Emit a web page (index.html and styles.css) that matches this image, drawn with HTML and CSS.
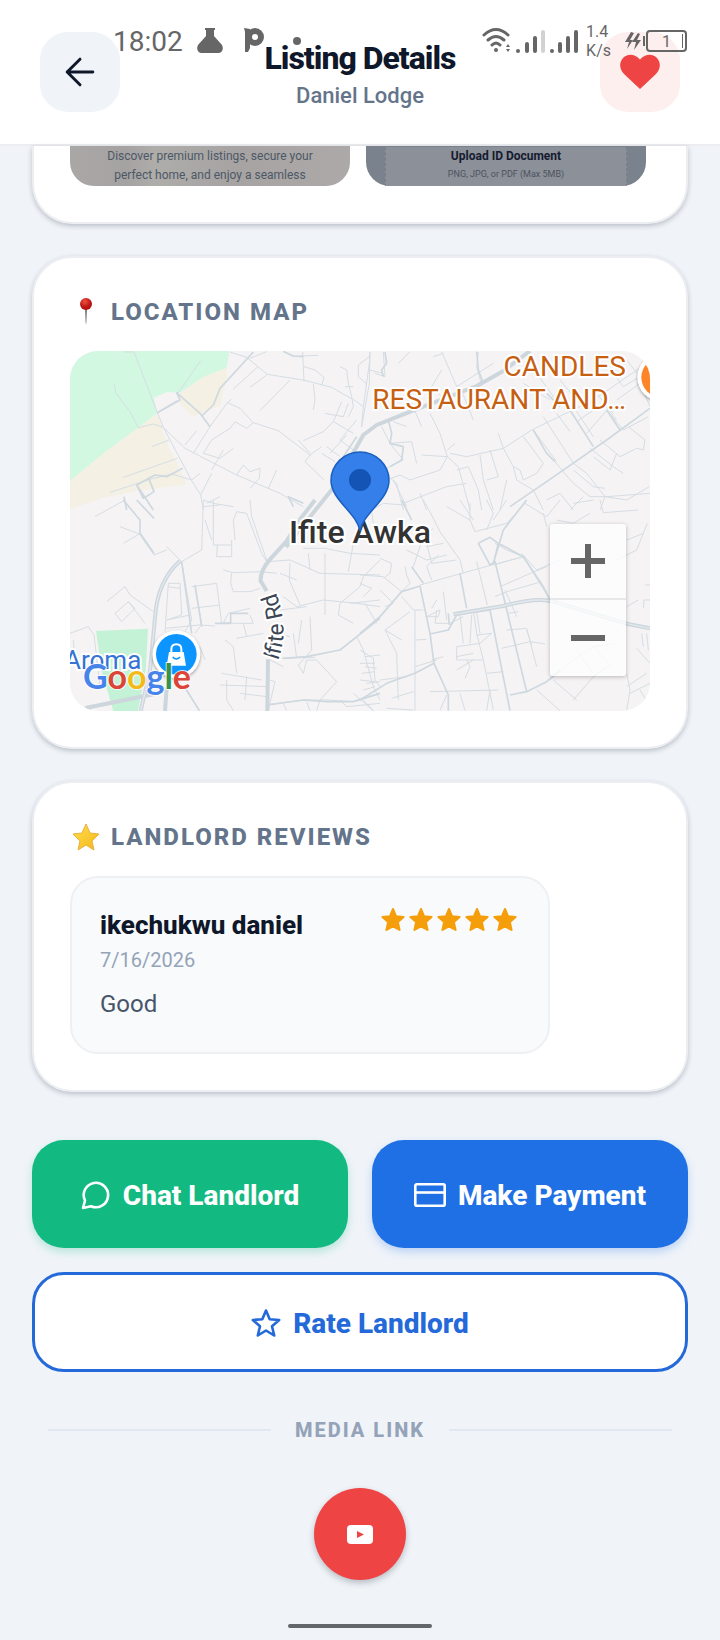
FILE: index.html
```html
<!DOCTYPE html>
<html lang="en">
<head>
    <meta charset="UTF-8">
    <meta name="viewport" content="width=device-width, initial-scale=1.0">
    <title>Listing Details</title>
    <link rel="stylesheet" href="styles.css">
</head>
<body>
    <div class="status-bar">
        <div class="status-left">
            <span class="clock">18:02</span>
            <svg class="flask-icon" width="26" height="26" viewBox="0 0 26 26"><path d="M8 0h10v2h-1v6l8 9c2 4 0 8-3 8H4c-3 0-5-4-3-8l8-9V2H8z"/></svg>
            <svg class="app-icon" width="22" height="26" viewBox="0 0 22 26"><circle cx="12" cy="9" r="6" fill="none" stroke="#666" stroke-width="6"/><path d="M1 0l6 1v19l-2 4H2V4z"/></svg>
            <span class="status-dot"></span>
        </div>
        <div class="status-right">
            <svg width="96" height="28" viewBox="0 0 96 28">
                <g fill="none" stroke="#666" stroke-width="3" stroke-linecap="round">
                    <path d="M2 8q12-11 24 0M6 13q8-7 16 0M10 18q4-4 8 0"/>
                    <path d="M45 17v7M53 11v13M78 17v7M86 11v13M94 5v19" stroke-width="4"/>
                    <path d="M61 5v19" stroke="#d2d2d2" stroke-width="4"/>
                </g>
                <circle cx="14" cy="23" r="2"/><circle cx="36" cy="24" r="2"/><circle cx="70" cy="24" r="2"/>
                <path d="M24 20l2-3 2 3zM24 22l2 3 2-3z"/>
            </svg>
            <div class="net-speed">1.4<br>K/s</div>
            <svg class="charge-icon" width="16" height="18" viewBox="0 0 16 18"><path d="M6 0L0 10h4l-2 7 6-9H5l4-7zM13 1L7 10h4l-2 8 7-10h-4l3-6z"/></svg>
            <div class="battery">1</div>
        </div>
    </div>

    <header class="header">
        <button class="icon-button" aria-label="Go back">
            <svg width="44" height="44" viewBox="0 0 24 24" fill="none" stroke="#0f172a" stroke-width="1.6" stroke-linecap="round" stroke-linejoin="round"><path d="M19 12H5M12 19l-7-7 7-7"/></svg>
        </button>
        <div class="header-text">
            <h1>Listing Details</h1>
            <p>Daniel Lodge</p>
        </div>
        <button class="icon-button favorite" aria-label="Remove from favorites">
            <svg width="40" height="36" viewBox="0 0 40 36"><path fill="#ef4444" d="M20 35L4.5 20.5C-1.2 15-1 8 3.5 3.5 8.5-1 15.5.5 20 5.5 24.5.5 31.5-1 36.5 3.5 41 8 41.2 15 35.5 20.5z"/></svg>
        </button>
    </header>

    <main class="content">
        <section class="card gallery-card">
            <div class="gallery">
                <div class="photo photo-home">
                    <p>Discover premium listings, secure your perfect home, and enjoy a seamless</p>
                </div>
                <div class="photo photo-upload">
                    <div class="upload-panel">
                        <strong>Upload ID Document</strong>
                        <small>PNG, JPG, or PDF (Max 5MB)</small>
                    </div>
                </div>
            </div>
        </section>

        <section class="card">
            <h2>
                <svg width="32" height="32" viewBox="0 0 32 32">
                    <defs>
                        <radialGradient id="pin-head" cx="40%" cy="30%"><stop offset="0" stop-color="#f0503c"/><stop offset="1" stop-color="#b71414"/></radialGradient>
                        <linearGradient id="pin-needle" x2="0" y2="1"><stop offset="0" stop-color="#777"/><stop offset="1" stop-color="#ddd"/></linearGradient>
                    </defs>
                    <path fill="url(#pin-needle)" d="M15 13h2v13l-1 3-1-3z"/>
                    <circle cx="16" cy="8" r="6" fill="url(#pin-head)"/>
                </svg>
                Location Map
            </h2>
            <div class="map">
                <svg class="map-canvas" viewBox="0 0 1740 1080" preserveAspectRatio="xMidYMid slice">
                    <rect width="1740" height="1080" fill="#f5f3f4"/>
                    <!-- parks and sand -->
                    <path fill="#d2f8e2" d="M0 0H478L470 50L400 78L330 125L293 123L252 140L262 186L205 230L110 300L0 390z"/>
                    <path fill="#f4f0e4" d="M470 50L470 80L450 165L366 198L330 165L325 130L400 78zM262 186L285 260L350 400L200 420L100 440L0 475V390L110 300L205 230z"/>
                    <path fill="#f5f3f4" d="M252 140L293 123L366 196L300 300L262 186z"/>
                    <path fill="#c3f2d7" d="M78 840L234 833L227 960L204 1080H130L95 960z"/>

                    <g class="road">
                        <!-- north-west -->
                        <g transform="translate(-150 -333)">
                            <path d="M310 336H342L412 518L430 562L515 722L542 765L550 810M542 362L470 465M282 432L288 460L330 515L355 563L400 552L430 562L495 625L555 656L650 705L780 760L850 800"/>
                            <path d="M630 336L680 352L742 403L850 420L935 442L1010 485L1030 500M635 478L622 488L570 560L520 640M622 488L660 505L700 548L775 572L870 645L905 620M700 548L680 565L645 545L630 565L575 600L550 640M810 420L720 512M740 405L690 442M714 380L640 447M690 355L740 335M790 335L820 350L850 348L895 346M848 336L852 425M852 380L885 390L912 412L905 436M880 432L885 480L880 510M960 380L980 390L985 430L995 470L1000 500L985 530"/>
                            <path d="M1050 336L1048 370L1030 500L1025 560M1048 350L1015 375L1015 410L1040 432M965 485L940 545L910 575L850 602M940 545L1000 580M915 520L970 530L985 490M870 645L855 665L912 720M905 640L945 665M835 600L870 640M920 620L960 650M980 585L930 640"/>
                            <path d="M410 518L470 482M395 620L447 600M310 712L472 655M270 757L400 715L455 702L515 720M495 615L530 572M550 640L600 655L640 625M575 690L610 630M650 705L670 675L690 695L720 685L718 715L690 745M745 745L770 690M515 720L540 700M542 765L575 700M550 800L600 795M560 790L600 770M1000 440L975 440M1010 540L960 600L1000 630"/>
                        </g>
                        <!-- north-east -->
                        <g transform="translate(870 -333)">
                            <path d="M30 336L28 430L5 560M70 336L75 410L45 400M150 335L115 370M245 335L290 440L400 370M355 336L350 380L365 435M220 350L250 340M70 400L28 390M245 390L215 440L255 480M300 440L340 540M150 480L185 560M210 520L240 580L262 650L295 680L330 810M65 560L90 610L155 605L170 670M90 610L130 660L88 680L60 700M100 545L140 560M262 650L185 645M262 650L240 690L150 720L120 705L80 720M262 630L285 610M290 690L325 680L355 750L365 810M320 650L270 640M320 650L430 625L515 570L700 480L860 370"/>
                            <path d="M360 645L370 720L400 810M390 630L415 710L380 720M415 580L430 625M520 570L590 665M490 590L550 670L530 700M550 530L640 670L680 700L735 770M590 520L630 575M530 700L490 720L480 690L460 680L470 720L520 750L550 810M460 680L430 625M580 660L640 730L690 770L740 770L870 760M640 690L700 740L735 745M700 650L750 690L770 640M690 625L760 680L790 700M720 600L780 650L830 625L850 630L855 600L805 560M650 545L730 490L770 540M680 580L750 500M740 510L790 570L865 530M770 480L840 430L870 500M700 450L760 520M640 500L700 590M800 360L840 410L790 440L760 400M600 420L650 480L630 510M490 430L570 480M530 400L580 470"/>
                            <path d="M100 720L140 800M60 690L110 730L130 810M130 790L260 740L320 730M180 760L200 810M420 810L440 720M560 780L600 760L640 810M630 810L670 770M720 810L735 770L800 780L868 740"/>
                        </g>
                        <!-- south-west -->
                        <g transform="translate(-150 447)">
                            <path d="M225 50L315 0M310 130L358 102L300 80M358 102L402 165L440 150M440 140L485 185L545 150L550 0M260 305L315 260L330 285L400 335M285 340L325 305L345 325L305 365L285 340M325 305L375 370M150 400L205 380L222 405L240 560M160 420L165 480M435 395L445 250L480 250L485 345L440 360M485 185L515 360L495 395M445 260L480 265M515 260L590 250L605 370M515 325L600 315M435 385L540 375L585 378M525 400L540 380M545 370L525 260M490 560L540 632M540 440L555 480M440 360L510 345"/>
                            <path d="M550 0L580 10L640 20M580 0V135H635M555 60L575 120M635 120V170H590L592 135M640 60L650 35L680 40L725 160L740 185M640 60L645 120M610 210L640 218L730 215M635 218L632 250L640 275L690 275L720 265M690 0L695 50L740 180M740 185L810 180L900 220L1080 225M810 190L808 240L840 315M720 215L770 220M780 220L830 240M790 290L830 320L910 300L1010 310L1080 320M780 330L860 320"/>
                            <path d="M915 160V345M865 160L870 210M850 145H915L990 160L1080 165M985 215L1000 130M1080 180L1030 230L1020 260L960 310L955 345L1000 370M990 310L1080 300M1010 410L1030 450L1060 560L1080 600M1035 310L1070 370M870 350L875 450L835 495M835 495L850 520L860 480L890 480L950 545L900 600M820 400L830 475M810 410L770 400M845 360L835 430M650 415L730 400M670 370L680 410M690 345L700 370L650 370M650 370L610 368L625 340L690 325M615 420L640 440L650 520M605 520L725 540M600 555L745 560M660 580L740 590M620 540V600L640 632M680 530L675 600M750 540L765 545L745 630M750 480L790 500"/>
                            <path d="M780 475L885 472M1035 470L1080 465M1035 500L1070 505M1040 550L1080 545M1000 580L1060 632M960 600L980 620L1080 610M860 605L870 632M790 610L800 632M740 615L850 600L920 600L1000 605L1080 580M900 600L890 632"/>
                        </g>
                        <!-- south-east -->
                        <g transform="translate(870 447)">
                            <path d="M0 50L70 10L130 15M30 0L40 70M190 0L215 45L240 95M220 85L190 110L160 200M140 150L200 180L260 165M200 130L215 190L290 180M240 95L300 180L310 220M250 130L200 140M235 165L200 200L215 240M180 255L395 195L490 170L440 150L405 130M350 185L382 315M420 260L500 225L560 200M405 290L440 275L545 245M400 195L490 170L570 300M485 160L530 210L600 180M260 20L330 60L345 95L440 70M300 0L340 60M330 60L330 10M380 0L400 40L380 90M400 60L440 0M440 70L495 10L560 50L600 0M560 80L550 40M590 60L640 70L690 40M720 0L730 38L835 30M640 10L700 0M800 120L850 100L862 70M770 180L830 150L850 100"/>
                            <path d="M0 225L70 230L125 275M60 175L95 190L90 220L70 235M0 250L35 265L10 290M60 270L100 310L75 320M140 225L150 250L125 275M140 225L135 200M125 290L160 330H190M150 335L75 390L110 460L115 600M165 330V632M165 420L200 418M75 390L125 420M200 350L240 330L235 350L200 350M215 325L230 300M250 275L260 360M230 330L225 370L270 370L310 350M290 345L350 335L360 400M300 345L310 430M340 330L350 400L370 480L400 630M350 405L395 400M290 440L360 430L395 400M290 440V480L370 480M290 470L340 460M290 510L340 480M315 535L330 500L320 480M335 345L330 430"/>
                            <path d="M380 520L430 515M425 445L510 425L555 432M440 390L500 385L530 500M445 340L475 335M515 435L500 390M435 270L470 350M210 575L415 570M300 580L315 632M260 585L240 630M165 500L230 480M215 480L250 470M0 450L40 475L45 540L60 560M0 490L45 490M5 520L45 515M0 540L45 545M10 570L45 560M95 595L160 575M60 540L140 530M80 625L160 630M10 600L40 632M380 632L390 570M530 570L600 632M580 540L650 600M640 600L700 530L740 500M700 530L750 495L700 440M570 540L640 480L700 440L770 430M650 450L700 520M800 520L810 570L800 632M800 560L860 520M810 580L870 550M840 570L870 620M800 320L835 300M850 325L852 300L870 300M845 400L850 440M860 400L865 450M830 445L870 490M855 255H870"/>
                        </g>
                    </g>

                    <!-- secondary streets -->
                    <g class="road street">
                        <path transform="translate(-150 -333)" d="M412 518L480 480L470 458L540 520L570 560M545 528L580 495L600 445L700 336M488 685L440 710L405 705L350 735L370 775L402 755L385 712M350 735L400 810M312 770L320 810M790 334L820 348L850 350M1010 590L970 650M820 800L805 770L850 790"/>
                        <path transform="translate(870 -333)" d="M75 336L80 370L65 390L70 410M85 540L95 580L90 610L130 620L125 660L90 680M350 335L355 390L370 430M450 800L560 725L740 600L870 505M520 570L560 640L585 665M630 510L700 620M740 510L780 570M560 460L600 500"/>
                        <path transform="translate(-150 447)" d="M310 0L360 60V100L402 160M350 0L402 55M485 185L515 400M525 255L545 380M585 370H632V340H685M790 475L860 470L960 450L1080 355M740 615L850 600L920 605L1000 605L1080 580M538 632L500 570"/>
                        <path transform="translate(870 447)" d="M125 0L155 60M0 400L60 350L125 275L180 258L210 400L222 490L265 585V632M210 402L265 390L290 345L390 330M300 220L320 325M355 130L390 195L405 185L500 575L450 585M355 130L390 112L415 130L400 190L430 90L500 0M415 130L490 170L550 260L570 300M390 330L450 632M0 600L80 550L165 520L222 490M500 575L560 545L600 510M265 340L268 375M155 200L190 250"/>
                    </g>

                    <!-- main roads -->
                    <g class="road highway">
                        <path d="M648 588L790 410L880 252L920 222L1000 190L1220 105L1300 60L1380 0M592 1080L594 925M590 720L572 690Q570 660 600 625L650 570L690 505L735 447"/>
                        <path d="M212 1080L240 960L255 800Q262 690 330 630M60 1080L50 1070L250 1030M290 1010L285 1080M1150 790L1300 765Q1410 735 1460 755L1670 818L1740 832"/>
                    </g>
                    <g class="road highway-core">
                        <path d="M212 1080L240 960L255 800Q262 690 330 630M1150 790L1300 765Q1410 735 1460 755L1670 818L1740 832"/>
                    </g>

                    <path id="ifite-rd" fill="none" d="M624 930Q662 825 612 712"/>
                    <text class="road-label"><textPath href="#ifite-rd">Ifite Rd</textPath></text>

                    <!-- places -->
                    <g class="place">
                        <circle cx="319" cy="910" r="72" fill="#fff"/>
                        <circle cx="319" cy="910" r="61" fill="#0c94ff"/>
                        <path fill="#fff" d="M297 903H341L348 944H290z"/>
                        <path fill="none" stroke="#fff" stroke-width="6" d="M304 910V895Q304 880 319 880Q334 880 334 895V910"/>
                        <path fill="none" stroke="#0c94ff" stroke-width="5" d="M308 918Q319 930 330 918"/>
                    </g>
                    <g class="place">
                        <circle cx="1774" cy="79" r="72" fill="#fff"/>
                        <circle cx="1774" cy="79" r="60" fill="#ff8427"/>
                    </g>
                </svg>

                <span class="map-label place-orange">CANDLES<br>RESTAURANT AND…</span>
                <span class="map-label town">Ifite Awka</span>
                <span class="map-label place-blue">Aroma</span>
                <span class="map-label google"><i class="g-blue">G</i><i class="g-red">o</i><i class="g-yellow">o</i><i class="g-blue">g</i><i class="g-green">l</i><i class="g-red">e</i></span>

                <svg class="marker" width="60" height="82" viewBox="0 0 60 82">
                    <path d="M30 80C27 62 1 49 1 29.5A29 28.5 0 0 1 59 29.5C59 49 33 62 30 80z" fill="#347fe9" stroke="#1b5fc0" stroke-width="1.5"/>
                    <circle cx="30" cy="29" r="11" fill="#1354b5"/>
                </svg>

                <div class="zoom-controls">
                    <button aria-label="Zoom in"><svg width="34" height="34" viewBox="0 0 34 34"><path d="M14 0h6v14h14v6H20v14h-6V20H0v-6h14z"/></svg></button>
                    <button aria-label="Zoom out"><svg width="34" height="34" viewBox="0 0 34 34"><path d="M0 14h34v6H0z"/></svg></button>
                </div>
            </div>
        </section>

        <section class="card">
            <h2>
                <svg width="32" height="32" viewBox="0 0 32 32">
                    <defs><linearGradient id="gold" x2="1" y2="1"><stop offset="0" stop-color="#ffe04a"/><stop offset="1" stop-color="#f5b51c"/></linearGradient></defs>
                    <path fill="url(#gold)" stroke="#eab13a" stroke-width="1" stroke-linejoin="round" d="M16 3l4 9 9 1-7 7 2 9-8-5-8 5 2-9-7-7 9-1z"/>
                </svg>
                Landlord Reviews
            </h2>
            <article class="review">
                <div class="review-header">
                    <div>
                        <h3>ikechukwu daniel</h3>
                        <time datetime="2026-07-16">7/16/2026</time>
                    </div>
                    <div class="stars" role="img" aria-label="5 out of 5 stars">
                        <svg width="0" height="0" class="sprite"><symbol id="star" viewBox="0 0 26 26"><path d="M13 3l3 7.200 7.600.7-5.700 5.200 1.700 7.900-6.600-3.700L6.400 24l1.700-7.900-5.700-5.200 7.600-.7z"/></symbol></svg>
                        <svg width="26" height="26"><use href="#star"/></svg>
                        <svg width="26" height="26"><use href="#star"/></svg>
                        <svg width="26" height="26"><use href="#star"/></svg>
                        <svg width="26" height="26"><use href="#star"/></svg>
                        <svg width="26" height="26"><use href="#star"/></svg>
                    </div>
                </div>
                <p>Good</p>
            </article>
        </section>

        <div class="actions">
            <button class="action chat">
                <svg width="30" height="30" viewBox="0 0 30 30" fill="none" stroke="#fff" stroke-width="2.6" stroke-linejoin="round"><path d="M2 28L4 20.5A12.2 12.2 0 1 1 10 26.200z"/></svg>
                Chat Landlord
            </button>
            <button class="action pay">
                <svg width="32" height="28" viewBox="0 0 32 28" fill="none" stroke="#fff" stroke-width="2.6"><rect x="1.3" y="3.3" width="29.4" height="21.4" rx="1.5"/><path d="M1 11.5h30"/></svg>
                Make Payment
            </button>
            <button class="action rate">
                <svg width="30" height="30" viewBox="0 0 30 30" fill="none" stroke="#2469d9" stroke-width="2.6" stroke-linejoin="round"><path d="M15 2.500l3.700 8.700 9.500.8-7.200 6.200 2.200 9.300-8.200-5-8.200 5 2.200-9.300L1.800 12l9.500-.8z"/></svg>
                Rate Landlord
            </button>
        </div>

        <div class="divider"><span>Media Link</span></div>

        <a class="youtube" href="#" aria-label="YouTube">
            <svg width="28" height="20" viewBox="0 0 28 20"><rect x="1" y="1" width="26" height="19" rx="4" fill="#fff"/><path fill="#ef4444" d="M11 7l7 3.500-7 3.500z"/></svg>
        </a>
    </main>

    <div class="home-indicator"></div>
</body>
</html>
```
FILE: styles.css
```css
:root {
    --bg-color: #f0f4f9;
    --text-color: #0f172a;
    --slate: #64748b;
    --light-slate: #94a3b8;
    --line: #e2e8f0;
    --blue: #1f6fe5;
    --blue-outline: #2469d9;
    --green: #12b981;
    --red: #ef4444;
    --system: #666;
}

* {
    margin: 0;
    padding: 0;
    box-sizing: border-box;
}

body {
    background-color: var(--bg-color);
    color: var(--text-color);
    font-family: Roboto, "Liberation Sans", sans-serif;
}

button {
    border: none;
    font-family: inherit;
    cursor: pointer;
}

svg {
    flex-shrink: 0;
}

/* System status bar, drawn over the header */
.status-bar {
    position: absolute;
    top: 22px;
    left: 0;
    right: 0;
    z-index: 2;
    display: flex;
    justify-content: space-between;
    padding: 0 33px 0 113px;
    color: var(--system);
    fill: var(--system);
    pointer-events: none;
}

.status-left,
.status-right {
    display: flex;
    align-items: center;
    height: 38px;
}

.clock {
    font-size: 28px;
}

.flask-icon {
    margin-left: 14px;
}

.app-icon {
    margin-left: 20px;
}

.status-dot {
    width: 8px;
    height: 8px;
    margin-left: 28px;
    border-radius: 50%;
    background-color: var(--system);
}

.net-speed {
    margin-left: 8px;
    font-size: 16px;
    line-height: 19px;
}

.charge-icon {
    margin-left: 14px;
}

.battery {
    position: relative;
    width: 41px;
    height: 22px;
    margin-left: 5px;
    border: 2px solid var(--system);
    border-radius: 4px;
    font-size: 16px;
    line-height: 19px;
    text-align: center;
}

.battery::before {
    content: "";
    position: absolute;
    top: 4px;
    left: -5px;
    width: 2px;
    height: 10px;
    background-color: var(--system);
}

.battery::after {
    content: "";
    position: absolute;
    top: 2px;
    right: 2px;
    width: 1px;
    height: 14px;
    background-color: var(--system);
}

.header {
    display: flex;
    align-items: center;
    justify-content: space-between;
    height: 146px;
    padding: 0 40px;
    border-bottom: 2px solid #ebedf0;
    background-color: white;
}

.header-text {
    padding-top: 10px;
    text-align: center;
}

.header h1 {
    font-size: 32px;
    font-weight: 800;
    line-height: 38px;
    letter-spacing: -1px;
}

.header p {
    color: var(--slate);
    font-size: 22px;
    font-weight: 500;
    line-height: 38px;
}

.icon-button {
    display: flex;
    align-items: center;
    justify-content: center;
    width: 80px;
    height: 80px;
    border-radius: 28px;
    background-color: #f0f4f9;
}

.favorite {
    background-color: #feefef;
}

.content {
    padding: 0 32px;
}

.card {
    margin-bottom: 32px;
    padding: 36px;
    border: 2px solid #eceef2;
    border-radius: 40px;
    background-color: white;
    box-shadow: 0 2px 5px rgba(15, 23, 42, 0.24);
}

.card h2 {
    display: flex;
    align-items: center;
    gap: 9px;
    height: 35px;
    margin-bottom: 22px;
    color: var(--slate);
    font-size: 24px;
    font-weight: 800;
    letter-spacing: 2px;
    text-transform: uppercase;
}

.gallery-card {
    padding-top: 0;
    border-top: none;
    border-radius: 0 0 40px 40px;
}

.gallery {
    display: flex;
    gap: 16px;
}

.photo {
    flex: 0 0 280px;
    height: 40px;
    padding-top: 1px;
    border-radius: 0 0 24px 24px;
    overflow: hidden;
    text-align: center;
}

.photo-home {
    padding-left: 28px;
    padding-right: 28px;
    background: linear-gradient(90deg, #aaa8a6, #a5a2a2 20%, #aeadaa 30%, #a6a3a2 60%, #aca9a8);
    color: #4d5866;
    font-size: 12px;
    line-height: 19px;
}

.photo-upload {
    padding-left: 19px;
    padding-right: 19px;
    background-color: #7a828d;
}

.upload-panel {
    display: flex;
    flex-direction: column;
    height: 40px;
    border: 1px dashed #777e8a;
    border-width: 0 1px;
    background-color: #8c9098;
}

.upload-panel strong {
    color: #141b30;
    font-size: 12px;
    line-height: 19px;
}

.upload-panel small {
    color: #4c535f;
    font-size: 9px;
    line-height: 16px;
}

.map {
    position: relative;
    height: 360px;
    border-radius: 28px;
    overflow: hidden;
}

.map-canvas {
    display: block;
    width: 100%;
    height: 100%;
}

.road {
    fill: none;
    stroke: #d5dde3;
    stroke-width: 3;
    stroke-linejoin: round;
}

.street {
    stroke: #ced8df;
    stroke-width: 5;
}

.highway {
    stroke: #ccd6dc;
    stroke-width: 12;
}

.highway-core {
    stroke: #e3e9ed;
    stroke-width: 4;
}

.place {
    filter: drop-shadow(0 4px 4px rgba(0, 0, 0, 0.35));
}

.road-label {
    fill: #3c4654;
    stroke: white;
    stroke-width: 12px;
    stroke-linejoin: round;
    paint-order: stroke;
    font-size: 68px;
}

.map-label {
    position: absolute;
    -webkit-text-stroke: 4px white;
    paint-order: stroke fill;
    white-space: nowrap;
}

.place-orange {
    top: -1px;
    right: 24px;
    color: #c75f12;
    font-size: 28px;
    line-height: 33px;
    text-align: right;
}

.town {
    top: 161px;
    left: 50%;
    transform: translateX(-50%);
    color: #333;
    font-size: 32px;
    font-weight: 500;
    line-height: 40px;
}

.place-blue {
    left: -6px;
    bottom: 35px;
    color: #3573d4;
    font-size: 26px;
    line-height: 32px;
}

.google {
    left: 13px;
    bottom: 15px;
    font-family: Lato, sans-serif;
    font-size: 34px;
    font-weight: 700;
    line-height: 40px;
    -webkit-text-stroke: 2px rgba(255, 255, 255, 0.8);
}

.google i {
    font-style: normal;
}

.g-blue {
    color: #4683ea;
}

.g-red {
    color: #dc4437;
}

.g-yellow {
    color: #f3ba1a;
}

.g-green {
    color: #34924e;
}

.marker {
    position: absolute;
    top: 100px;
    left: 50%;
    transform: translateX(-50%);
}

.zoom-controls {
    position: absolute;
    right: 24px;
    bottom: 35px;
    width: 76px;
    border-radius: 3px;
    background-color: rgba(255, 255, 255, 0.75);
    box-shadow: 0 1px 4px rgba(0, 0, 0, 0.25);
}

.zoom-controls button {
    display: flex;
    align-items: center;
    justify-content: center;
    width: 100%;
    height: 76px;
    background: none;
    fill: var(--system);
}

.zoom-controls button:first-child {
    border-bottom: 2px solid #e6e8e9;
}

.review {
    width: 480px;
    max-width: 100%;
    padding: 28px;
    border: 2px solid #eef0f3;
    border-radius: 28px;
    background-color: #f8fafc;
}

.review-header {
    display: flex;
    justify-content: space-between;
}

.review h3 {
    font-size: 26px;
    font-weight: 800;
    line-height: 38px;
}

.review time {
    display: block;
    color: var(--light-slate);
    font-size: 20px;
    line-height: 32px;
}

.review p {
    margin-top: 8px;
    color: #475569;
    font-size: 24px;
    line-height: 40px;
}

.stars {
    display: flex;
    gap: 2px;
    padding-right: 2px;
    fill: #f59e0b;
    stroke: #f59e0b;
    stroke-width: 2px;
    stroke-linejoin: round;
}

.sprite {
    position: absolute;
}

.actions {
    display: grid;
    grid-template-columns: 1fr 1fr;
    gap: 24px;
    margin-top: 48px;
}

.action {
    display: flex;
    align-items: center;
    justify-content: center;
    gap: 12px;
    height: 108px;
    padding-top: 2px;
    border-radius: 32px;
    color: white;
    font-size: 28px;
    font-weight: 800;
}

.chat {
    background-color: var(--green);
    box-shadow: 0 4px 8px rgba(18, 185, 129, 0.25);
}

.pay {
    background-color: var(--blue);
    box-shadow: 0 4px 8px rgba(31, 111, 229, 0.25);
}

.rate {
    grid-column: 1 / -1;
    height: 100px;
    border: 3px solid var(--blue-outline);
    background-color: white;
    color: var(--blue-outline);
}

.divider {
    display: flex;
    align-items: center;
    gap: 24px;
    margin: 46px 16px;
    color: var(--light-slate);
    font-size: 20px;
    font-weight: 800;
    line-height: 24px;
    letter-spacing: 2px;
    text-transform: uppercase;
}

.divider::before,
.divider::after {
    content: "";
    flex: 1;
    height: 2px;
    background-color: var(--line);
}

.youtube {
    display: flex;
    align-items: center;
    justify-content: center;
    width: 92px;
    height: 92px;
    margin: 0 auto;
    border-radius: 50%;
    background-color: var(--red);
    box-shadow: 0 3px 6px rgba(15, 23, 42, 0.25);
}

.home-indicator {
    width: 144px;
    height: 4px;
    margin: 44px auto 12px;
    border-radius: 2px;
    background-color: #63666a;
}
```
